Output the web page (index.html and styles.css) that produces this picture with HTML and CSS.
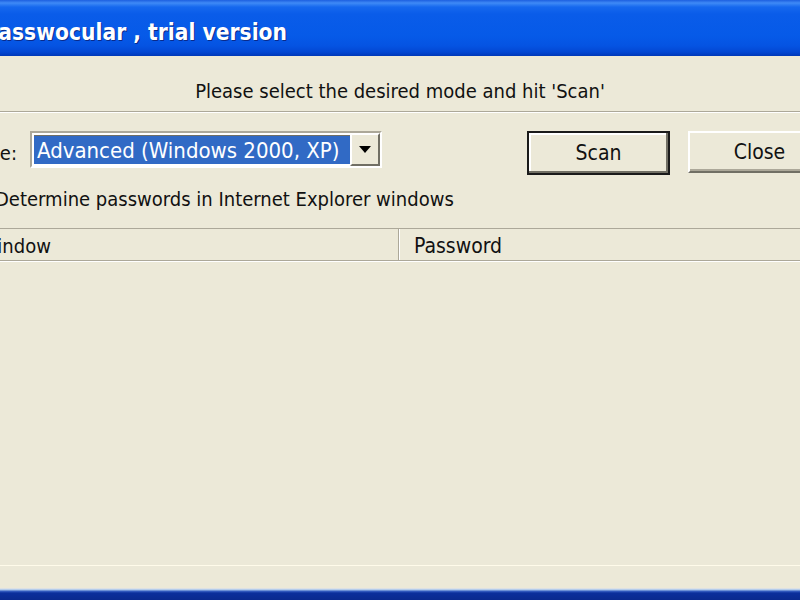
FILE: index.html
```html
<!DOCTYPE html>
<html>
<head>
<meta charset="utf-8">
<link rel="stylesheet" href="styles.css">
</head>
<body>
<div class="screen">
  <div class="window">
    <div class="titlebar"><span class="title">Passwocular , trial version</span></div>
    <div class="content">
      <div class="prompt">Please select the desired mode and hit 'Scan'</div>
      <div class="sep"></div>
      <div class="controls">
        <label class="mode-label">Mode:</label>
        <div class="combo">
          <div class="combo-value">Advanced (Windows 2000, XP)</div>
          <div class="combo-btn">
            <svg width="12" height="7" viewBox="0 0 12 7"><path d="M0 0H12L6 7Z" fill="#000"/></svg>
          </div>
        </div>
        <button class="btn btn-default">Scan</button>
        <button class="btn btn-close">Close</button>
      </div>
      <div class="desc">Determine passwords in Internet Explorer windows</div>
      <div class="list">
        <div class="list-header">
          <div class="col col-window">Window</div>
          <div class="col col-pass">Password</div>
        </div>
        <div class="list-body"></div>
      </div>
      <div class="status"></div>
    </div>
    <div class="frame-bottom"></div>
  </div>
</div>
</body>
</html>
```

FILE: styles.css
```css
html, body {
  margin: 0;
  padding: 0;
  width: 800px;
  height: 600px;
  overflow: hidden;
  background: #ECE9D8;
}

.screen {
  width: 800px;
  height: 600px;
  overflow: hidden;
}

.window {
  margin-left: -60px;
  width: 920px;
  height: 600px;
  display: flex;
  flex-direction: column;
  font-family: "DejaVu Sans Condensed", "Liberation Sans", sans-serif;
  font-size: 20px;
  color: #111;
  background: #ECE9D8;
}

.titlebar {
  height: 56px;
  flex: none;
  box-sizing: border-box;
  padding-left: 44px;
  padding-top: 17px;
  background: linear-gradient(to bottom, #1d5fe0 0px, #3f8af6 3px, #1668ee 7px, #0a5ce9 14px, #065ae8 36px, #0553e2 46px, #0347d3 52px, #0038b8 56px);
}

.title {
  font-family: "DejaVu Sans Condensed", "Liberation Sans", sans-serif;
  font-weight: bold;
  font-size: 22.6px;
  line-height: 30px;
  color: #fff;
  text-shadow: 1px 1px 0 #0a2a8a;
}

.content {
  flex: 1;
  display: flex;
  flex-direction: column;
}

.prompt {
  height: 55px;
  box-sizing: border-box;
  padding-top: 23px;
  line-height: 24px;
  text-align: center;
}

.sep {
  height: 0;
  border-top: 1px solid #ACA899;
  border-bottom: 1px solid #FFFFFF;
}

.controls {
  margin-top: 18px;
  height: 44px;
  display: flex;
  align-items: flex-start;
}

.mode-label {
  width: 77px;
  margin-right: 13px;
  text-align: right;
  line-height: 24px;
  padding-top: 10px;
}

.combo {
  width: 352px;
  height: 37px;
  box-sizing: border-box;
  border-top: 2px solid #ACA899;
  border-left: 2px solid #ACA899;
  border-right: 2px solid #fff;
  border-bottom: 2px solid #fff;
  display: flex;
  background: #fff;
}

.combo-value {
  flex: 1;
  margin: 2px 0 2px 2px;
  background: #316AC5;
  color: #fff;
  font-size: 22px;
  line-height: 29px;
  padding-left: 3px;
  border-top: 1px solid #716F64;
  white-space: nowrap;
  overflow: hidden;
}

.combo-btn {
  width: 30px;
  flex: none;
  box-sizing: border-box;
  background: #ECE9D8;
  border-top: 2px solid #fff;
  border-left: 2px solid #fff;
  border-right: 2px solid #716F64;
  border-bottom: 2px solid #716F64;
  display: flex;
  align-items: center;
  justify-content: center;
}

.btn {
  font: inherit;
  font-size: 21px;
  color: #111;
  background: #ECE9D8;
  padding: 0;
  box-sizing: border-box;
}

.btn-default {
  margin-left: 145px;
  width: 143px;
  height: 44px;
  border: 2px solid #1a1a1a;
  box-shadow: inset -2px -2px 0 #716F64, inset 2px 2px 0 #fff;
}

.btn-close {
  margin-left: 18px;
  width: 143px;
  height: 42px;
  border: none;
  border-top: 2px solid #fff;
  border-left: 2px solid #fff;
  border-right: 2px solid #716F64;
  border-bottom: 2px solid #716F64;
  box-shadow: inset -2px -2px 0 #ACA899;
}

.desc {
  margin-top: 12px;
  line-height: 24px;
  padding-left: 55px;
}

.list {
  margin-top: 17px;
  flex: 1;
  display: flex;
  flex-direction: column;
}

.list-header {
  display: flex;
  height: 33px;
  box-sizing: border-box;
  border-top: 1px solid #ACA899;
  border-bottom: 1px solid #ACA899;
  box-shadow: 0 1px 0 #fff;
}

.col {
  line-height: 34px;
  box-sizing: border-box;
}

.col-window {
  width: 459px;
  padding-left: 40px;
  border-right: 1px solid #ACA899;
  box-shadow: 1px 0 0 #fff;
}

.col-pass {
  flex: 1;
  padding-left: 15px;
  font-size: 21px;
}

.list-body {
  flex: 1;
}

.status {
  height: 22px;
  border-top: 1px solid #fffbea;
  flex: none;
}

.frame-bottom {
  height: 12px;
  flex: none;
  background: linear-gradient(to bottom, #efe6d8 0px, #c9dbf0 1px, #9fbde6 2px, #3b64c6 3px, #0b2f9c 5px, #0a2a8e 12px);
}
```
